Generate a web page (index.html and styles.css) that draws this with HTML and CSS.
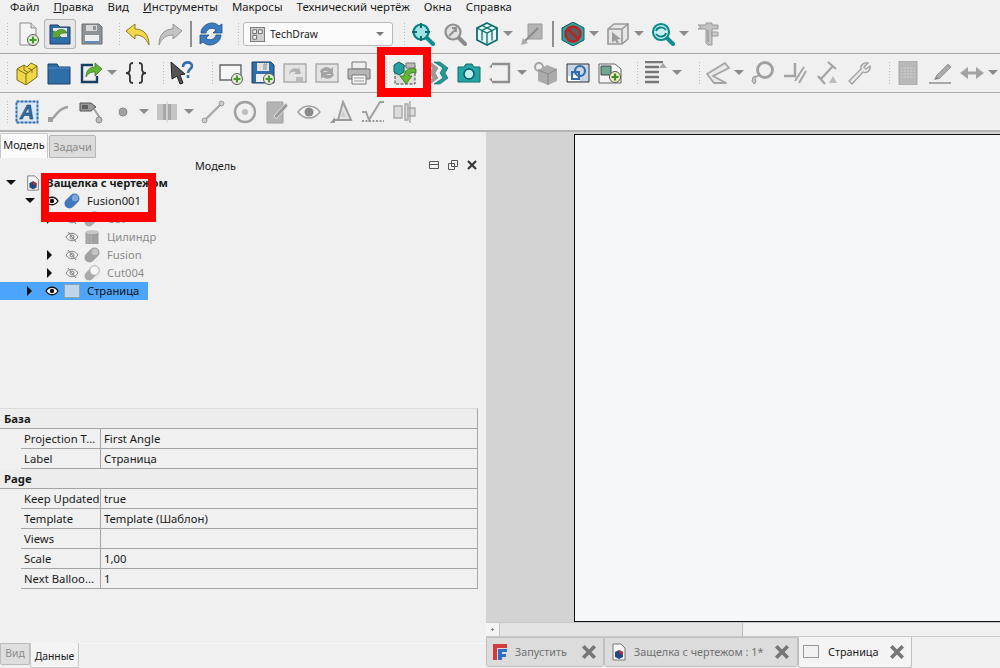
FILE: index.html
```html
<!DOCTYPE html>
<html lang="ru">
<head>
<meta charset="utf-8">
<title>FreeCAD TechDraw</title>
<link rel="stylesheet" href="styles.css">
</head>
<body>
<svg class="defs" width="0" height="0" aria-hidden="true">
<defs>
<symbol id="new" viewBox="0 0 24 24"><path d="M4 1h11l5 5v17H4z" fill="#f4f4f4" stroke="#8c8c8c"/><path d="M15 1v5h5" fill="#ddd" stroke="#8c8c8c"/><circle cx="17" cy="18" r="5.500" fill="#e8f0dc" stroke="#555"/><path d="M17 14.500v7M13.500 18h7" stroke="#3f9a2a" stroke-width="2.200"/></symbol>
<symbol id="open" viewBox="0 0 24 24"><path d="M2 3h8l2 2h10v17H2z" fill="#2f6ea8" stroke="#1c3f66"/><path d="M5 6h14v9H5z" fill="#e7e7e7"/><path d="M19 11c-1-4-8-5-11-1l-3-1 1 7 7-1-2-2c2-2 5-2 8-2z" fill="#5ba82e" stroke="#2f6b16" stroke-width=".6"/></symbol>
<symbol id="save" viewBox="0 0 24 24"><path d="M2 2h17l3 3v17H2z" fill="#8d9296" stroke="#6b6f73"/><path d="M6 3h11v6H6z" fill="#d8d8d8"/><path d="M13 4h3v4h-3z" fill="#8d9296"/><path d="M5 13h14v8H5z" fill="#eee"/><path d="M5 19h14v2H5z" fill="#5f8cb8"/></symbol>
<symbol id="undo" viewBox="0 0 24 24"><path d="M0 9l9-7v5c8 0 14 5 14 16-3-7-7-10-14-10v4z" fill="#f3d84e" stroke="#8c7a22" stroke-linejoin="round"/></symbol>
<symbol id="redo" viewBox="0 0 24 24"><path d="M24 9l-9-7v5C7 7 1 12 1 23c3-7 7-10 14-10v4z" fill="#c4c4c4" stroke="#939393" stroke-linejoin="round"/></symbol>
<symbol id="refresh" viewBox="0 0 24 24"><path d="M2 11C2 5 8 1 13 1c3 0 5 1 7 3l3-2v9h-9l3-3c-3-3-9-2-10 3z" fill="#3a7cc0" stroke="#1f4e82" stroke-width=".8"/><path d="M22 13c0 6-6 10-11 10-3 0-5-1-7-3l-3 2v-9h9l-3 3c3 3 9 2 10-3z" fill="#3a7cc0" stroke="#1f4e82" stroke-width=".8"/></symbol>
<symbol id="tdsmall" viewBox="0 0 16 16"><rect x=".5" y=".5" width="15" height="15" fill="#cfcfcf" stroke="#777"/><path d="M3 3h4v4H3zM9 3h4v4H9zM3 9h4v4H3z" fill="#f4f4f4" stroke="#666"/></symbol>
<symbol id="zoomfit" viewBox="0 0 24 24"><path d="M15 15l7 7" stroke="#0d8f8f" stroke-width="4" stroke-linecap="round"/><circle cx="10" cy="10" r="7.500" fill="#9fe2e2" stroke="#0b7f7f" stroke-width="2.200"/><path d="M10 1v5M10 14v5M1 10h5M14 10h5" stroke="#0b6f6f" stroke-width="2"/></symbol>
<symbol id="zoomsel" viewBox="0 0 24 24"><path d="M15 15l7 7" stroke="#8a8a8a" stroke-width="4" stroke-linecap="round"/><circle cx="10" cy="10" r="7.500" fill="#e0e0e0" stroke="#8e8e8e" stroke-width="2.200"/><path d="M6 14l7-7M9 6h4v4" stroke="#8e8e8e" stroke-width="1.800" fill="none"/></symbol>
<symbol id="cube" viewBox="0 0 24 24"><path d="M12 1l10 5v12l-10 5-10-5V6z" fill="#e4f6f6" stroke="#0d6e6e" stroke-width="1.800"/><path d="M2 6l10 5 10-5M12 11v12M7 3.500l10 5v10M17 3.500l-10 5v10" fill="none" stroke="#0d6e6e" stroke-width="1.300"/></symbol>
<symbol id="plane" viewBox="0 0 24 24"><path d="M8 2h14v15H8z" fill="#b4b4b4" stroke="#9a9a9a"/><path d="M18 6L3 21" stroke="#8a8a8a" stroke-width="2"/><path d="M1 23l2-7 5 5z" fill="#a8a8a8"/></symbol>
<symbol id="nosign" viewBox="0 0 24 24"><path d="M12 0l11 6v12l-11 6-11-6V6z" fill="#2ba3a3" stroke="#0d5c5c"/><circle cx="12" cy="12" r="7.500" fill="#5d5d5d" stroke="#c22020" stroke-width="2.400"/><path d="M6.500 6.500l11 11" stroke="#c22020" stroke-width="2.400"/></symbol>
<symbol id="wire" viewBox="0 0 24 24"><path d="M2 7l6-5h14v15l-6 5H2z" fill="#e6e6e6" stroke="#989898" stroke-width="1.600"/><path d="M2 7h14v15M16 7l6-5" fill="none" stroke="#989898" stroke-width="1.600"/><path d="M6 10l9 7-4 .5 2 3-2 1-2-3-3 2z" fill="#9c9c9c"/></symbol>
<symbol id="magref" viewBox="0 0 24 24"><path d="M15 15l7 7" stroke="#0d8f8f" stroke-width="4" stroke-linecap="round"/><circle cx="10" cy="10" r="8" fill="#c8efef" stroke="#0b8a8a" stroke-width="2.200"/><path d="M5 9c1-4 7-5 10-1M15 11c-1 4-7 5-10 1" stroke="#0b7f7f" stroke-width="1.800" fill="none"/></symbol>
<symbol id="caliper" viewBox="0 0 24 24"><path d="M2 3h8V1h6v2h6v4h-6v16h-4l-2-2V7H2l3-2z" fill="#c2c2c2" stroke="#9a9a9a"/><path d="M16 10h6v4h-6z" fill="#ccc" stroke="#9a9a9a"/><path d="M12 8v12" stroke="#8a8a8a"/></symbol>
<symbol id="part" viewBox="0 0 24 24"><path d="M2 8l7-4 3 2 4-4 6 3v11l-11 8-9-5z" fill="#f0d848" stroke="#7d6c14"/><path d="M2 8l9 5v10M11 13l11-8M9 4v5l4 2.500M13 7l4 2v3" fill="none" stroke="#7d6c14"/></symbol>
<symbol id="folder" viewBox="0 0 24 24"><path d="M1 3h9l2 3h11v17H1z" fill="#2f6ea8" stroke="#1c3f66"/><path d="M1 7h22" stroke="#4f8cc4"/></symbol>
<symbol id="share" viewBox="0 0 24 24"><path d="M14 4H3v17h15v-6" fill="#eee" stroke="#173f66" stroke-width="2.400"/><path d="M23 8l-7-6v4c-5 0-9 3-9 10 2-4 5-5 9-5v4z" fill="#62b534" stroke="#2f6b16" stroke-width=".7"/></symbol>
<symbol id="braces" viewBox="0 0 24 24"><path d="M9 2c-4 0-3 3-3 6s-1 4-4 4c3 0 4 1 4 4s-1 6 3 6M15 2c4 0 3 3 3 6s1 4 4 4c-3 0-4 1-4 4s1 6-3 6" fill="none" stroke="#333" stroke-width="1.800"/></symbol>
<symbol id="help" viewBox="0 0 24 24"><path d="M1 1l14 12-5 1 3 8-3 1-3-8-5 3z" fill="#555" stroke="#222"/><path d="M13 6c0-6 9-6 9-1 0 3-4 3-4 7M18 14v3" fill="none" stroke="#2f6ea8" stroke-width="2.600"/></symbol>
<symbol id="pageadd" viewBox="0 0 24 24"><path d="M1 4h21v15H1z" fill="#f6f6f6" stroke="#666" stroke-width="1.400"/><circle cx="18" cy="18" r="5.500" fill="#e8f0dc" stroke="#555"/><path d="M18 14.500v7M14.500 18h7" stroke="#3f9a2a" stroke-width="2.200"/></symbol>
<symbol id="saveadd" viewBox="0 0 24 24"><path d="M1 1h19l3 3v18H1z" fill="#2f6ea8" stroke="#1c3f66"/><path d="M6 2h12v8H6z" fill="#e2e2e2"/><path d="M13 3h1M15 3h1M13 3v6M15 3v6" stroke="#888"/><path d="M5 13h12v8H5z" fill="#eee"/><circle cx="18" cy="18" r="5.500" fill="#e8f0dc" stroke="#555"/><path d="M18 14.500v7M14.500 18h7" stroke="#3f9a2a" stroke-width="2.200"/></symbol>
<symbol id="redraw" viewBox="0 0 24 24"><path d="M1 3h22v18H1z" fill="#e4e4e4" stroke="#aaa" stroke-width="1.400"/><path d="M6 14c0-5 5-8 9-6l1-2 2 7-7 0 2-2c-3-1-6 0-7 3z" fill="#b0b0b0"/><path d="M13 16h7v4h-7z" fill="#bbb"/></symbol>
<symbol id="refpage" viewBox="0 0 24 24"><path d="M1 3h22v18H1z" fill="#e4e4e4" stroke="#aaa" stroke-width="1.400"/><path d="M5 11c1-5 8-6 11-3l2-2v7h-7l2-2c-2-2-5-1-6 1zM19 13c-1 5-8 6-11 3l-2 2v-7h7l-2 2c2 2 5 1 6-1z" fill="#a4a4a4"/></symbol>
<symbol id="print" viewBox="0 0 24 24"><path d="M5 1h14v7H5z" fill="#eee" stroke="#777"/><path d="M1 8h22v10H1z" fill="#b6b6b6" stroke="#777"/><path d="M5 14h14v9H5z" fill="#f6f6f6" stroke="#777"/><path d="M7 17h10M7 20h10" stroke="#999"/></symbol>
<symbol id="view" viewBox="0 0 24 24"><path d="M2 5h20v18H2z" fill="#dcdcdc" stroke="#444" stroke-dasharray="3 1.500"/><path d="M1 4l5-3 5 3v7l-5 3-5-3z" fill="#25a0a0" stroke="#0d5c5c"/><path d="M13 2h9v5h-9z" fill="#bbb" stroke="#777"/><path d="M23 8c-6-2-12 1-12 7H7l6 8 6-8h-3c0-3 3-4 7-3z" fill="#62b534" stroke="#2f6b16" stroke-width=".7"/></symbol>
<symbol id="chev" viewBox="0 0 24 24"><path d="M1 2l7 5-3 5 3 5-7 5 4 1 8-6-3-5 3-5-8-6z" fill="#9a9a9a" stroke="#777" stroke-width=".5"/><path d="M9 1l9 6-3 5 3 5-9 6h6l8-6-3-5 3-5-8-6z" fill="#1f9a9a" stroke="#0d5c5c" stroke-width=".6"/></symbol>
<symbol id="camera" viewBox="0 0 24 24"><path d="M1 6h6l2-3h6l2 3h6v15H1z" fill="#22a5a5" stroke="#0d6e6e"/><circle cx="12" cy="13" r="5" fill="#bdf0f0" stroke="#0d5c5c" stroke-width="1.500"/></symbol>
<symbol id="bracket" viewBox="0 0 24 24"><path d="M3 3h17v18H3" fill="none" stroke="#8f8f8f" stroke-width="2.400"/><path d="M3 3L0 6l3 1zM3 21l-3-3 3-1z" fill="#8f8f8f"/></symbol>
<symbol id="box" viewBox="0 0 24 24"><circle cx="5" cy="6" r="4" fill="none" stroke="#a4a4a4" stroke-width="2"/><path d="M4 9l9-5 10 4v12l-9 4-10-4z" fill="#ababab"/><path d="M4 9l10 4 9-5M14 13v11" stroke="#888" fill="none"/></symbol>
<symbol id="bluebox" viewBox="0 0 24 24"><path d="M1 3h22v18H1z" fill="#c9d6e8" stroke="#333"/><path d="M2 20V15l8-1 4 6z" fill="#fff"/><circle cx="14" cy="10" r="5" fill="none" stroke="#2f6ea8" stroke-width="2.200"/><path d="M6 11h7v7H6z" fill="none" stroke="#2f6ea8" stroke-width="2"/></symbol>
<symbol id="imgadd" viewBox="0 0 24 24"><path d="M1 3h16l6 5v14H1z" fill="#f4f4f4" stroke="#666"/><path d="M3 5h10v9H3z" fill="#6fa890" stroke="#445"/><circle cx="17" cy="16" r="5.500" fill="#eef0b8" stroke="#555"/><path d="M17 12.500v7M13.500 16h7" stroke="#3f8a2a" stroke-width="2.200"/></symbol>
<symbol id="align" viewBox="0 0 24 24"><path d="M1 1h18M1 6h14M1 11h14M1 16h14M1 21h14" stroke="#777" stroke-width="2.400"/><path d="M15 7l4-5 4 5z" fill="#a8a8a8"/></symbol>
<symbol id="set" viewBox="0 0 24 24"><path d="M1 13L19 2l4 5L7 15l13 7H8z" fill="#e8e8e8" stroke="#a4a4a4" stroke-width="1.800" stroke-linejoin="round"/></symbol>
<symbol id="ring" viewBox="0 0 24 24"><circle cx="14" cy="9" r="7.500" fill="#f0f0f0" stroke="#a0a0a0" stroke-width="2.800"/><path d="M9 14l-5 3 1 4-2 2-2-3 1-4z" fill="#c4c4c4" stroke="#999"/></symbol>
<symbol id="lshape" viewBox="0 0 24 24"><path d="M1 15h11V2" fill="none" stroke="#a4a4a4" stroke-width="2.400"/><path d="M12 20l9-14M16 22L23 10" stroke="#a4a4a4" stroke-width="2"/></symbol>
<symbol id="axis" viewBox="0 0 24 24"><path d="M3 15l7 8M5 19L18 5M13 1l8 7" stroke="#a4a4a4" stroke-width="2.200" fill="none"/><path d="M14 22l4-7 4 7z" fill="#bbb"/></symbol>
<symbol id="wrench" viewBox="0 0 24 24"><path d="M2 20L14 8c-1-4 3-7 7-6l-4 4 2 2 4-3c1 4-3 8-7 6L5 23z" fill="#e6e6e6" stroke="#a0a0a0" stroke-width="1.300"/></symbol>
<symbol id="sheet" viewBox="0 0 24 24"><path d="M3 0h18v24H3z" fill="#b8b8b8" stroke="#a8a8a8"/><path d="M5 7h14M5 10h14M5 13h14M5 16h14" stroke="#d0d0d0" stroke-dasharray="2 1"/></symbol>
<symbol id="pencil" viewBox="0 0 24 24"><path d="M8 15L20 3l3 3L11 18z" fill="#ababab" stroke="#9a9a9a"/><path d="M8 15l-2 4 5-1z" fill="#888"/><path d="M1 22h22" stroke="#a8a8a8" stroke-width="2"/></symbol>
<symbol id="arrows" viewBox="0 0 24 24"><path d="M8 6v12L0 12zM16 6v12l8-6z" fill="#a2a2a2"/><path d="M8 10.500h8v3H8z" fill="#a2a2a2"/></symbol>
<symbol id="textA" viewBox="0 0 24 24"><path d="M1.500 1.500h21v21h-21z" fill="#dce8f4" stroke="#2f6ea8" stroke-width="2" stroke-dasharray="3 1"/><text x="12" y="19" text-anchor="middle" class="svg-a">A</text></symbol>
<symbol id="curve" viewBox="0 0 24 24"><path d="M3 20c5-1 7-12 18-13" fill="none" stroke="#a0a0a0" stroke-width="2.400"/><path d="M1 17h5v5H1z" fill="#a0a0a0"/></symbol>
<symbol id="balloon" viewBox="0 0 24 24"><path d="M1 3h11l5 4-5 4H1z" fill="#999" stroke="#555"/><path d="M3 6h6M3 8h6" stroke="#222"/><path d="M15 9l6 9" stroke="#a0a0a0" stroke-width="2"/><circle cx="20" cy="20" r="3" fill="#bbb" stroke="#888"/></symbol>
<symbol id="dot" viewBox="0 0 24 24"><circle cx="12" cy="12" r="4" fill="#a0a0a0" stroke="#8a8a8a"/></symbol>
<symbol id="midbar" viewBox="0 0 24 24"><path d="M1 4h20v16H1z" fill="#c4c4c4"/><path d="M7 4h8v16H7z" fill="#a8a8a8"/><path d="M11 1v22" stroke="#ddd" stroke-width="1.500"/></symbol>
<symbol id="line" viewBox="0 0 24 24"><path d="M4 20L20 4" stroke="#a8a8a8" stroke-width="2.400"/><circle cx="3.500" cy="20.500" r="2.400" fill="#ccc" stroke="#999"/><circle cx="20.500" cy="3.500" r="2.400" fill="#ccc" stroke="#999"/></symbol>
<symbol id="circle" viewBox="0 0 24 24"><circle cx="12" cy="12" r="10" fill="none" stroke="#a0a0a0" stroke-width="2.400"/><circle cx="12" cy="12" r="3" fill="#bdbdbd"/></symbol>
<symbol id="draw" viewBox="0 0 24 24"><path d="M2 2h16v21H2z" fill="#b4b4b4" stroke="#a0a0a0"/><path d="M9 16L21 3l2 3-12 13z" fill="#999" stroke="#ddd"/></symbol>
<symbol id="eye-big" viewBox="0 0 24 24"><path d="M1 12c6-8 16-8 22 0-6 8-16 8-22 0z" fill="#f4f4f4" stroke="#a0a0a0" stroke-width="1.400"/><circle cx="12" cy="12" r="4.500" fill="#8a8a8a"/></symbol>
<symbol id="tri" viewBox="0 0 24 24"><path d="M14 2l8 18H9z" fill="#e4e4e4" stroke="#a0a0a0" stroke-width="2"/><path d="M14 10l3 7h-5z" fill="#ccc"/><path d="M1 23l5-6v6z" fill="#999"/><path d="M4 20h18" stroke="#999" stroke-width="2"/></symbol>
<symbol id="check" viewBox="0 0 24 24"><path d="M1 12l4 0 3 8L19 2h4" fill="none" stroke="#a0a0a0" stroke-width="2"/><path d="M1 21h22" stroke="#999" stroke-dasharray="2 1.500" stroke-width="2"/></symbol>
<symbol id="bars" viewBox="0 0 24 24"><path d="M1 6h8v12H1zM12 4h3v16h-3zM15 8h7v8h-7z" fill="#ddd" stroke="#a8a8a8" stroke-width="1.400"/><path d="M17 1v22" stroke="#a8a8a8" stroke-width="1.400"/></symbol>
<symbol id="eye" viewBox="0 0 14 12"><path d="M1 6c3-5 9-5 12 0-3 5-9 5-12 0z" fill="#fff" stroke="#111" stroke-width="1.300"/><circle cx="7" cy="6" r="2.200" fill="#111"/></symbol>
<symbol id="eyeoff" viewBox="0 0 14 12"><path d="M1 6c3-5 9-5 12 0-3 5-9 5-12 0z" fill="none" stroke="#808080"/><circle cx="7" cy="6" r="2" fill="none" stroke="#808080"/><path d="M3 1l8 10" stroke="#808080"/></symbol>
<symbol id="doc" viewBox="0 0 16 18"><path d="M2 1h8l4 4v12H2z" fill="#f7f7f7" stroke="#777"/><path d="M4 9l4-2 4 2v5l-4 2-4-2z" fill="#25477f"/><path d="M8 7l4 2v3l-4-2z" fill="#b5323a"/></symbol>
<symbol id="capsule" viewBox="0 0 16 16"><path d="M5.500 10.500L10.500 5.500" stroke="#4478bd" stroke-width="10" stroke-linecap="round"/><circle cx="11" cy="5" r="3.200" fill="#7ea6dc"/></symbol>
<symbol id="capsuleg" viewBox="0 0 16 16"><path d="M5.500 10.500L10.500 5.500" stroke="#a2a2a2" stroke-width="10" stroke-linecap="round"/><circle cx="11" cy="5" r="3.200" fill="#c4c4c4"/></symbol>
<symbol id="cyl" viewBox="0 0 16 16"><path d="M1.500 3h13v12h-13z" fill="#a0a0a0"/><ellipse cx="8" cy="3" rx="6.500" ry="2" fill="#c8c8c8"/><path d="M4 5v9M7 5.500v9" stroke="#b8b8b8"/></symbol>
<symbol id="cut" viewBox="0 0 16 16"><path d="M5 11L9 7" stroke="#aaa" stroke-width="9" stroke-linecap="round"/><circle cx="10.500" cy="5.500" r="4.800" fill="#f6f6f6" stroke="#aaa"/></symbol>
<symbol id="pagei" viewBox="0 0 16 16"><rect x=".5" y="1.500" width="15" height="13" fill="#bed6ea" stroke="#8fa6b8"/></symbol>
<symbol id="pagetab" viewBox="0 0 16 16"><rect x=".5" y="1.500" width="15" height="12" fill="#f2f2f2" stroke="#999"/></symbol>
<symbol id="fclogo" viewBox="0 0 16 18"><path d="M1 1h14v4H5v12H1z" fill="#d43b3b"/><path d="M6 6h9v3h-5v2h4v3h-4v3H6z" fill="#2f6ec4"/></symbol>
<symbol id="x" viewBox="0 0 14 14"><path d="M2 2l10 10M12 2L2 12" stroke="#777" stroke-width="3.200"/></symbol>
</defs>
</svg>

<div class="app">
  <header class="top">
    <nav class="menu">
      <span>Файл</span><span><u>П</u>равка</span><span>Вид</span><span><u>И</u>нструменты</span><span>Макросы</span><span>Технический чертёж</span><span>Окна</span><span>Справка</span>
    </nav>

    <div class="bar bar-a">
      <i class="g g-s"></i>
      <b class="c"><svg class="ic"><use href="#new"/></svg></b>
      <b class="c on"><svg class="ic"><use href="#open"/></svg></b>
      <b class="c"><svg class="ic"><use href="#save"/></svg></b>
      <i class="g g-m"></i>
      <b class="c"><svg class="ic"><use href="#undo"/></svg></b>
      <b class="c"><svg class="ic"><use href="#redo"/></svg></b>
      <i class="sep"></i>
      <b class="c"><svg class="ic"><use href="#refresh"/></svg></b>
      <i class="g g-m"></i>
      <div class="combo"><svg class="ic-s"><use href="#tdsmall"/></svg><span>TechDraw</span><i class="tri-d"></i></div>
      <i class="g g-m"></i>
      <b class="c"><svg class="ic"><use href="#zoomfit"/></svg></b>
      <b class="c"><svg class="ic"><use href="#zoomsel"/></svg></b>
      <b class="c"><svg class="ic"><use href="#cube"/></svg></b>
      <i class="a"></i>
      <b class="c"><svg class="ic"><use href="#plane"/></svg></b>
      <i class="sep"></i>
      <b class="c"><svg class="ic"><use href="#nosign"/></svg></b>
      <i class="a"></i>
      <b class="c"><svg class="ic"><use href="#wire"/></svg></b>
      <i class="a"></i>
      <b class="c"><svg class="ic"><use href="#magref"/></svg></b>
      <i class="a"></i>
      <b class="c"><svg class="ic"><use href="#caliper"/></svg></b>
    </div>

    <div class="bar">
      <i class="g"></i>
      <b class="c"><svg class="ic"><use href="#part"/></svg></b>
      <b class="c"><svg class="ic"><use href="#folder"/></svg></b>
      <b class="c"><svg class="ic"><use href="#share"/></svg></b>
      <i class="a"></i>
      <b class="c"><svg class="ic"><use href="#braces"/></svg></b>
      <i class="g g-s"></i>
      <b class="c"><svg class="ic"><use href="#help"/></svg></b>
      <i class="g g-l"></i>
      <b class="c"><svg class="ic"><use href="#pageadd"/></svg></b>
      <b class="c"><svg class="ic"><use href="#saveadd"/></svg></b>
      <b class="c"><svg class="ic"><use href="#redraw"/></svg></b>
      <b class="c"><svg class="ic"><use href="#refpage"/></svg></b>
      <b class="c"><svg class="ic"><use href="#print"/></svg></b>
      <i class="g g-m"></i>
      <b class="c"><svg class="ic"><use href="#view"/></svg></b>
      <b class="c"><svg class="ic"><use href="#chev"/></svg></b>
      <b class="c"><svg class="ic"><use href="#camera"/></svg></b>
      <b class="c"><svg class="ic"><use href="#bracket"/></svg></b>
      <i class="a"></i>
      <b class="c"><svg class="ic"><use href="#box"/></svg></b>
      <b class="c"><svg class="ic"><use href="#bluebox"/></svg></b>
      <b class="c"><svg class="ic"><use href="#imgadd"/></svg></b>
      <i class="g g-s"></i>
      <b class="c"><svg class="ic"><use href="#align"/></svg></b>
      <i class="a"></i>
      <i class="g g-l"></i>
      <b class="c"><svg class="ic"><use href="#set"/></svg></b>
      <i class="a"></i>
      <b class="c"><svg class="ic"><use href="#ring"/></svg></b>
      <b class="c"><svg class="ic"><use href="#lshape"/></svg></b>
      <b class="c"><svg class="ic"><use href="#axis"/></svg></b>
      <b class="c"><svg class="ic"><use href="#wrench"/></svg></b>
      <i class="g g-l"></i>
      <b class="c"><svg class="ic"><use href="#sheet"/></svg></b>
      <b class="c"><svg class="ic"><use href="#pencil"/></svg></b>
      <b class="c"><svg class="ic"><use href="#arrows"/></svg></b>
      <i class="a"></i>
    </div>

    <div class="bar bar-c">
      <i class="g"></i>
      <b class="c"><svg class="ic"><use href="#textA"/></svg></b>
      <b class="c"><svg class="ic"><use href="#curve"/></svg></b>
      <b class="c"><svg class="ic"><use href="#balloon"/></svg></b>
      <b class="c"><svg class="ic"><use href="#dot"/></svg></b>
      <i class="a"></i>
      <b class="c"><svg class="ic"><use href="#midbar"/></svg></b>
      <i class="a"></i>
      <b class="c"><svg class="ic"><use href="#line"/></svg></b>
      <b class="c"><svg class="ic"><use href="#circle"/></svg></b>
      <b class="c"><svg class="ic"><use href="#draw"/></svg></b>
      <b class="c"><svg class="ic"><use href="#eye-big"/></svg></b>
      <b class="c"><svg class="ic"><use href="#tri"/></svg></b>
      <b class="c"><svg class="ic"><use href="#check"/></svg></b>
      <b class="c"><svg class="ic"><use href="#bars"/></svg></b>
    </div>
  </header>

  <main class="main">
    <aside class="side">
      <div class="side-tabs">
        <span class="stab active">Модель</span><span class="stab">Задачи</span>
      </div>
      <div class="dock-title">
        <span>Модель</span>
        <div class="dock-btns">
          <svg class="db" viewBox="0 0 10 10"><path d="M.5 1.500h9v7h-9zM.5 4.500h9" fill="none" stroke="#555"/></svg>
          <svg class="db" viewBox="0 0 10 10"><path d="M3.500.5h6v6h-6zM.5 3.500h6v6h-6z" fill="#f0f0f0" stroke="#555"/></svg>
          <svg class="db" viewBox="0 0 10 10"><path d="M1 1l8 8M9 1L1 9" stroke="#333" stroke-width="2"/></svg>
        </div>
      </div>
      <div class="tree">
        <div class="row root"><i class="tw open"></i><svg class="ti"><use href="#doc"/></svg><span>Защелка с чертежом</span></div>
        <div class="row l1"><i class="tw open"></i><svg class="ey"><use href="#eye"/></svg><svg class="ti"><use href="#capsule"/></svg><span>Fusion001</span></div>
        <div class="row l2 dim"><i class="tw closed"></i><svg class="ey"><use href="#eyeoff"/></svg><svg class="ti"><use href="#cut"/></svg><span>Cut</span></div>
        <div class="row l2 dim"><i class="tw none"></i><svg class="ey"><use href="#eyeoff"/></svg><svg class="ti"><use href="#cyl"/></svg><span>Цилиндр</span></div>
        <div class="row l2 dim"><i class="tw closed"></i><svg class="ey"><use href="#eyeoff"/></svg><svg class="ti"><use href="#capsuleg"/></svg><span>Fusion</span></div>
        <div class="row l2 dim"><i class="tw closed"></i><svg class="ey"><use href="#eyeoff"/></svg><svg class="ti"><use href="#cut"/></svg><span>Cut004</span></div>
        <div class="row l1 sel"><i class="tw closed"></i><svg class="ey"><use href="#eye"/></svg><svg class="ti"><use href="#pagei"/></svg><span>Страница</span></div>
      </div>
      <div class="props">
        <div class="grp">База</div>
        <div class="prop"><span>Projection T...</span><span>First Angle</span></div>
        <div class="prop"><span>Label</span><span>Страница</span></div>
        <div class="grp">Page</div>
        <div class="prop"><span>Keep Updated</span><span>true</span></div>
        <div class="prop"><span>Template</span><span>Template (Шаблон)</span></div>
        <div class="prop"><span>Views</span><span></span></div>
        <div class="prop"><span>Scale</span><span>1,00</span></div>
        <div class="prop"><span>Next Balloo...</span><span>1</span></div>
      </div>
      <div class="bottom-tabs">
        <span class="btab">Вид</span><span class="btab active">Данные</span>
      </div>
    </aside>

    <section class="work">
      <div class="canvas"><div class="paper"></div></div>
      <div class="hscroll"><i class="hs-btn"></i><i class="hs-track"></i></div>
      <div class="doc-tabs">
        <div class="dtab t1"><svg class="dt-i"><use href="#fclogo"/></svg><span>Запустить</span><svg class="dt-x"><use href="#x"/></svg></div>
        <div class="dtab t2"><svg class="dt-i"><use href="#doc"/></svg><span>Защелка с чертежом : 1*</span><svg class="dt-x"><use href="#x"/></svg></div>
        <div class="dtab t3 active"><svg class="dt-i"><use href="#pagetab"/></svg><span>Страница</span><svg class="dt-x"><use href="#x"/></svg></div>
      </div>
    </section>
  </main>

  <div class="mark mark-tool"></div>
  <div class="mark mark-tree"></div>
</div>
</body>
</html>
```
FILE: styles.css
```css
* { box-sizing: border-box; }
html, body { margin: 0; padding: 0; }
body { width: 1000px; height: 668px; overflow: hidden; background: #f0f0f0; color: #1a1a1a; font: 11.400px/16px "Noto Sans", "Open Sans", sans-serif; }
.defs { position: absolute; }
.app { position: relative; width: 1000px; height: 668px; display: flex; flex-direction: column; }

.top { flex: none; height: 132px; display: flex; flex-direction: column; }
.menu { height: 15px; padding-left: 10px; display: flex; gap: 14px; line-height: 13px; white-space: nowrap; }
.bar { height: 39px; padding-left: 11px; display: flex; align-items: center; border-bottom: 1px solid #a8a8a8; position: relative; }
.bar-a { height: 39px; padding-left: 12px; }
.bar-c { padding-top: 1px; border-bottom: 2px solid #b4b4b4; }
.c { flex: none; width: 32px; height: 30px; display: flex; align-items: center; justify-content: center; border-radius: 3px; }
.c.on { background: #e6e6e6; box-shadow: inset 0 0 0 1px #b4b4b4; }
.ic { width: 24px; height: 24px; display: block; }
.ic-s { width: 15px; height: 15px; flex: none; }
.g { flex: none; width: 13px; height: 24px; background: radial-gradient(circle, #bdbdbd 0.7px, transparent 0.9px) right 0 top 0 / 5px 3px repeat-y; }
.bar > .g:first-child { position: absolute; left: 5px; width: 5px; }
.g-s { width: 14px; }
.g-m { width: 14px; }
.g-l { width: 17px; }
.a { flex: none; width: 13px; height: 6px; position: relative; }
.a::before { content: ""; position: absolute; left: 0; top: 0; border-left: 5px solid transparent; border-right: 5px solid transparent; border-top: 5px solid #8a8a8a; }
.sep { flex: none; width: 9px; height: 26px; background: linear-gradient(#8f8f8f, #8f8f8f) center / 2px 100% no-repeat; }
.combo { flex: none; width: 150px; height: 24px; margin-left: 2px; padding: 0 8px 0 6px; display: flex; align-items: center; gap: 5px; background: #fbfbfb; border: 1px solid #b8b8b8; border-radius: 3px; font-size: 10.400px; }
.combo span { flex: 1; }
.tri-d { border-left: 4px solid transparent; border-right: 4px solid transparent; border-top: 4px solid #777; }
.svg-a { font: italic bold 20px "Liberation Sans", sans-serif; fill: #2f6ea8; stroke: #123; stroke-width: .4px; }

.main { flex: 1; min-height: 0; display: flex; }
.side { flex: none; width: 486px; display: flex; flex-direction: column; background: #f0f0f0; }
.side-tabs { height: 26px; padding: 1px 0 0 0; display: flex; align-items: flex-end; font-size: 11px; }
.stab { width: 47px; height: 23px; margin-left: 1px; text-align: center; line-height: 22px; background: #dcdcdc; border: 1px solid #b4b4b4; color: #8a8a8a; border-radius: 2px 2px 0 0; }
.stab.active { width: 48px; margin-left: 0; height: 25px; background: #fbfbfb; color: #1a1a1a; border-color: #c8c8c8; border-bottom: 0; }
.dock-title { height: 16px; padding-right: 8px; position: relative; text-align: center; font-size: 10.800px; line-height: 16px; }
.dock-title > span { display: block; width: 431px; }
.dock-btns { position: absolute; right: 9px; top: 2px; display: flex; gap: 9px; }
.db { width: 10px; height: 10px; display: block; }

.tree { height: 234px; padding-top: 0; font-size: 11.200px; }
.row { height: 18px; display: flex; align-items: center; white-space: nowrap; }
.tw { flex: none; width: 10px; height: 10px; position: relative; }
.tw.open::before { content: ""; position: absolute; left: 0; top: 2px; border-left: 5px solid transparent; border-right: 5px solid transparent; border-top: 5px solid #111; }
.tw.closed::before { content: ""; position: absolute; left: 2px; top: 0; border-top: 5px solid transparent; border-bottom: 5px solid transparent; border-left: 5px solid #111; }
.ey { flex: none; width: 14px; height: 12px; margin-left: 10px; }
.ti { flex: none; width: 16px; height: 16px; margin-left: 4px; }
.row span { margin-left: 7px; }
.root { padding-left: 6px; font-weight: 700; }
.root .ti { margin-left: 9px; }
.root span { margin-left: 6px; }
.l1 { padding-left: 25px; }
.l1 .ti { margin-left: 5px; }
.l2 { padding-left: 45px; color: #8c8c8c; }
.l2 .ti { margin-left: 5px; }
.sel { width: 148px; background: #4ca5fb; color: #111; }

.props { width: 478px; border-top: 1px solid #dcdcdc; border-right: 1px solid #a8a8a8; font-size: 11.300px; }
.grp { height: 20px; padding-left: 4px; line-height: 19px; font-weight: 700; border-bottom: 1px solid #a4a4a4; background: #ededed; }
.prop { height: 20px; margin-left: 21px; display: grid; grid-template-columns: 79px 1fr; line-height: 19px; border-bottom: 1px solid #a4a4a4; }
.prop span { padding-left: 3px; white-space: nowrap; overflow: hidden; }
.prop span + span { border-left: 1px solid #a4a4a4; }

.bottom-tabs { margin-top: auto; height: 25px; display: flex; align-items: flex-start; box-shadow: inset 0 1px 0 #fafafa; font-size: 10.400px; }
.btab { width: 30px; height: 22px; text-align: center; line-height: 19px; background: #dedede; color: #8a8a8a; border: 1px solid #bcbcbc; border-radius: 0 0 2px 2px; }
.btab.active { width: 49px; height: 25px; background: #f4f4f4; color: #1a1a1a; border-color: #c8c8c8; border-top: 0; line-height: 27px; }

.work { flex: 1; min-width: 0; display: flex; flex-direction: column; }
.canvas { flex: 1; min-height: 0; padding: 2px 0 0 88px; background: #d3d3d3; }
.paper { height: 100%; background: #f6f7f9; border: 1px solid #111; border-right: 0; }
.hscroll { flex: none; height: 14px; display: flex; background: #f0f0f0; border-top: 1px solid #c8c8c8; }
.hs-btn { flex: none; width: 14px; background: #f4f4f4 radial-gradient(circle, #888 1px, transparent 1.300px); border-right: 1px solid #c8c8c8; }
.hs-track { flex: none; width: 243px; background: #e4e4e4; border-right: 1px solid #bbb; }
.doc-tabs { flex: none; height: 32px; display: flex; align-items: flex-start; background: #f0f0f0; border-top: 1px solid #c8c8c8; font-size: 10.800px; }
.dtab { height: 30px; display: flex; align-items: center; background: #dcdcdc; color: #707070; border: 1px solid #c0c0c0; border-radius: 0 0 3px 3px; white-space: nowrap; }
.t1 { width: 118px; padding-left: 5px; }
.t2 { width: 194px; padding-left: 6px; }
.t3 { width: 114px; padding-left: 4px; }
.dtab.active { height: 31px; background: #f4f4f4; color: #1a1a1a; border-top: 0; }
.dt-i { flex: none; width: 16px; height: 18px; }
.dtab span { margin-left: 7px; flex: 1; }
.t2 span { margin-left: 7px; }
.t3 span { margin-left: 9px; }
.dt-x { flex: none; width: 16px; height: 16px; margin-right: 6px; }
.t2 .dt-x { margin-right: 7px; }

.mark { position: absolute; border-style: solid; border-color: #f00; }
.mark-tool { left: 377px; top: 47px; width: 54px; height: 50px; border-width: 8px 8px 9px 8px; }
.mark-tree { left: 41px; top: 173px; width: 115px; height: 49px; border-width: 6px 8px 10px 8px; }
```
